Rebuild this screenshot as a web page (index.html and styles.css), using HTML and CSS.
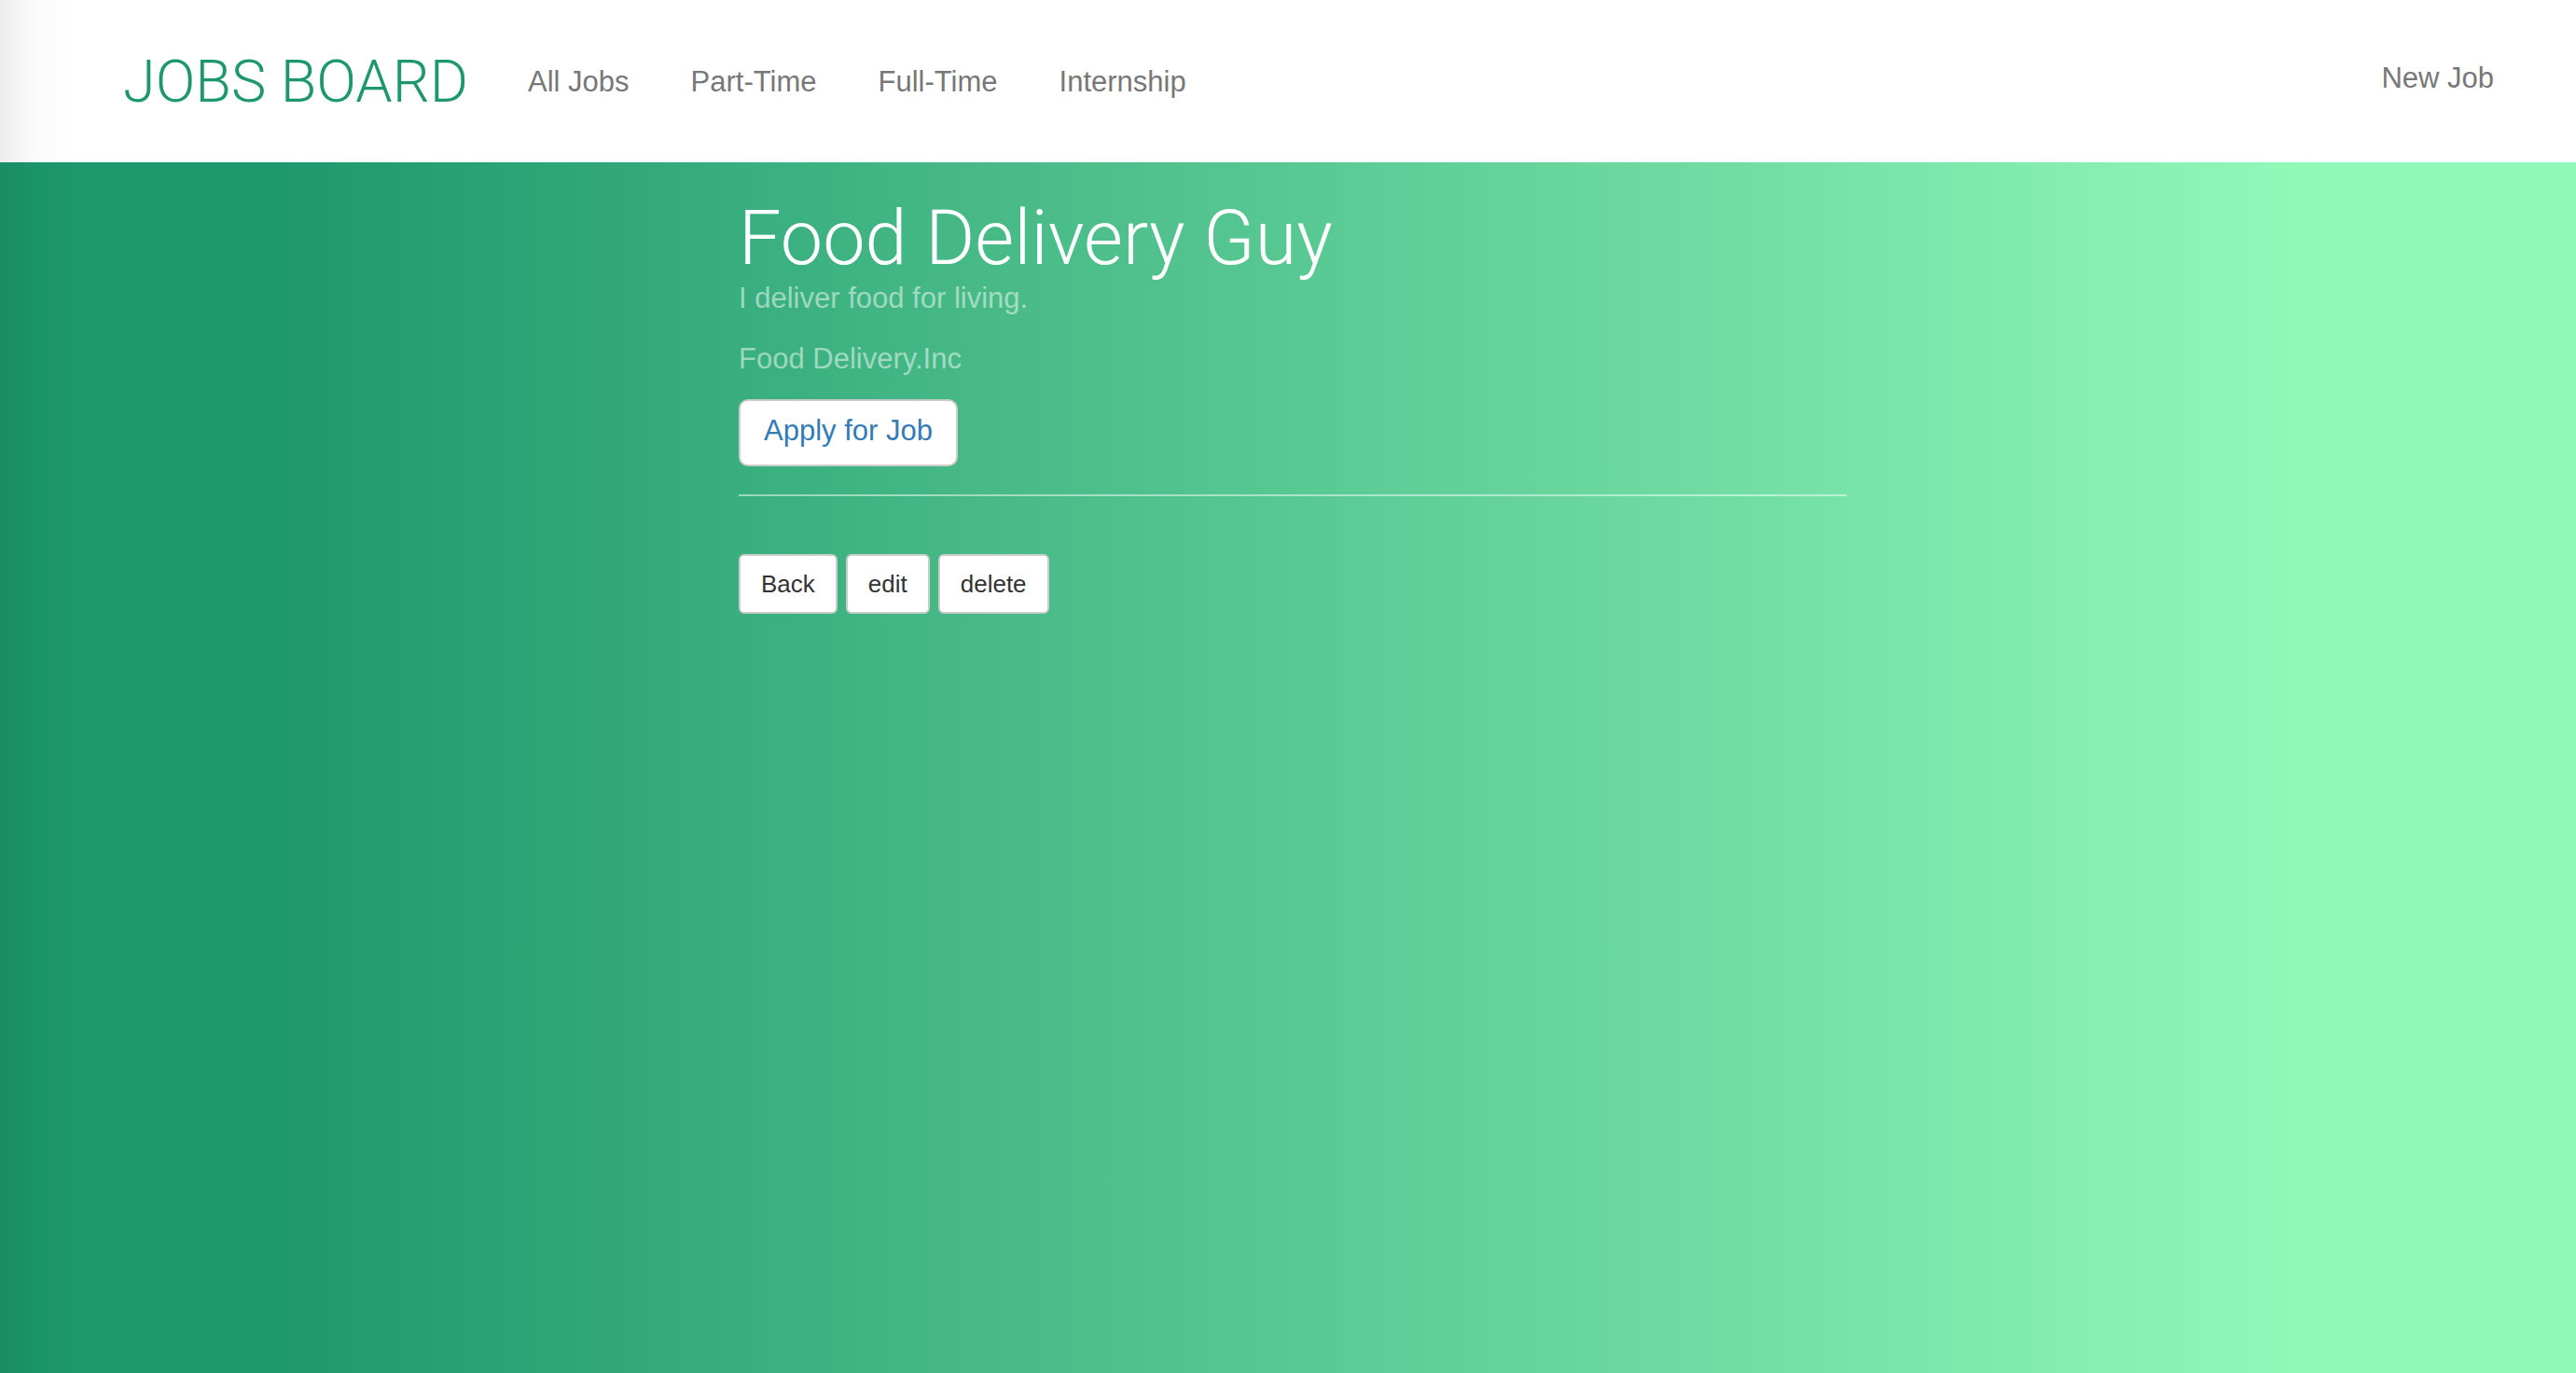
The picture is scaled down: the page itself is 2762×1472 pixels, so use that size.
FILE: index.html
```html
<!DOCTYPE html>
<html lang="en">
<head>
<meta charset="utf-8">
<title>Jobs Board</title>
<link rel="stylesheet" href="styles.css">
</head>
<body>
<header class="header">
  <a class="logo" href="#">JOBS BOARD</a>
  <nav class="nav">
    <a href="#">All Jobs</a>
    <a href="#">Part-Time</a>
    <a href="#">Full-Time</a>
    <a href="#">Internship</a>
  </nav>
  <a class="new-job" href="#">New Job</a>
</header>
<main class="page">
  <article class="job">
    <h1 class="title">Food Delivery Guy</h1>
    <p class="text">I deliver food for living.</p>
    <p class="text">Food Delivery.Inc</p>
    <button class="apply" type="button">Apply for Job</button>
    <hr class="rule">
    <div class="actions">
      <a class="btn" href="#">Back</a>
      <a class="btn" href="#">edit</a>
      <a class="btn" href="#">delete</a>
    </div>
  </article>
</main>
</body>
</html>
```
FILE: styles.css
```css
* {
  box-sizing: border-box;
}

body {
  margin: 0;
  min-height: 100vh;
  display: flex;
  flex-direction: column;
  font-family: "Liberation Sans", Arial, sans-serif;
  font-size: 31px;
  line-height: 44px;
  background: linear-gradient(to right, #1d976c 10%, #93f9b9 90%);
}

/* soft shade along the left window edge */
body::before {
  content: "";
  position: fixed;
  inset: 0 auto 0 0;
  width: 80px;
  background: linear-gradient(to right, rgba(0, 0, 0, 0.07), rgba(0, 0, 0, 0.02) 45%, transparent);
  pointer-events: none;
}

a {
  text-decoration: none;
}

.header {
  display: flex;
  align-items: center;
  height: 174px;
  padding: 2px 88px 0 132px;
  background: #fff;
}

.logo {
  font-family: Roboto, sans-serif;
  font-weight: 300;
  font-size: 63px;
  line-height: 88px;
  color: #1d976c;
}

.nav {
  display: flex;
  gap: 66px;
  margin-left: 64px;
}

.nav a,
.new-job {
  color: #777;
}

.new-job {
  margin-left: auto;
  padding-bottom: 8px;
}

.page {
  display: grid;
  grid-template-columns: 396fr 594fr 391fr;
  padding-top: 40px;
}

.job {
  grid-column: 2;
}

.title {
  margin: 0;
  font-family: Roboto, sans-serif;
  font-weight: 300;
  font-size: 81px;
  line-height: 84px;
  color: #fff;
}

.text {
  margin: 0 0 21px;
  color: rgba(255, 255, 255, 0.5);
}

.apply,
.btn {
  border: 2px solid #ccc;
  background: #fff;
  font-family: inherit;
}

.apply {
  display: block;
  height: 72px;
  padding: 0 25px 4px;
  border-radius: 10px;
  font-size: 31px;
  color: #337ab7;
}

.rule {
  height: 2px;
  margin: 30px 0 62px;
  border: 0;
  background: rgba(255, 255, 255, 0.5);
}

.actions {
  display: flex;
  gap: 9px;
}

.btn {
  padding: 10px 22px;
  border-radius: 6px;
  font-size: 26px;
  line-height: 40px;
  color: #333;
}
```
